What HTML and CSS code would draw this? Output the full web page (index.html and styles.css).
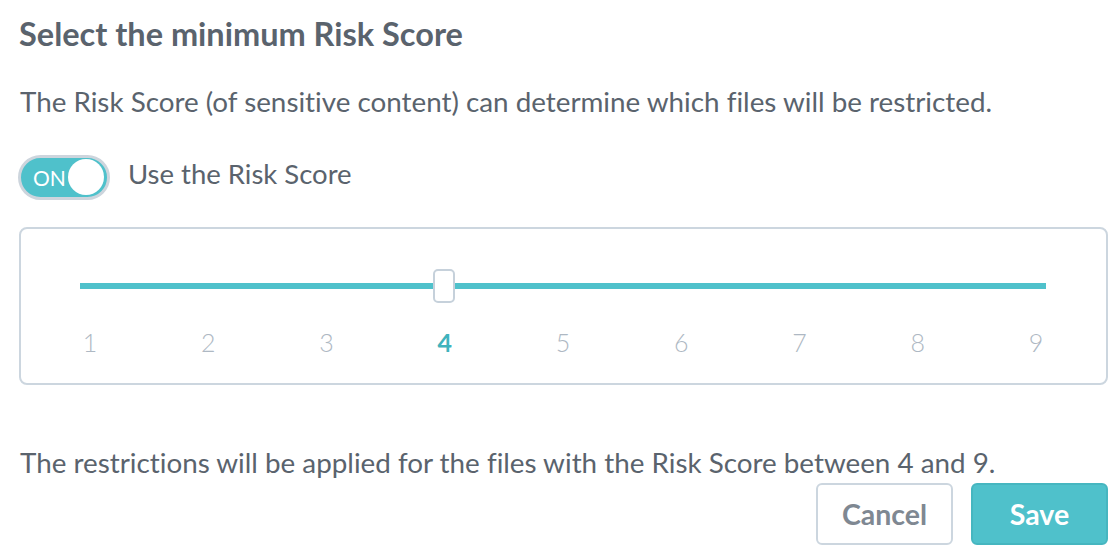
FILE: index.html
```
<!DOCTYPE html>
<html>
<head>
<meta charset="utf-8">
<link rel="stylesheet" href="styles.css">
</head>
<body>
<div class="panel">
  <h1 class="title">Select the minimum Risk Score</h1>
  <p class="desc">The Risk Score (of sensitive content) can determine which files will be restricted.</p>
  <div class="toggle-row">
    <div class="toggle"><span class="toggle-label">ON</span><span class="knob"></span></div>
    <span class="toggle-text">Use the Risk Score</span>
  </div>
  <div class="slider-box">
    <div class="track-wrap">
      <div class="track"></div>
      <div class="handle handle-at-4"></div>
    </div>
    <div class="labels">
      <span>1</span><span>2</span><span>3</span><span class="active">4</span><span>5</span><span>6</span><span>7</span><span>8</span><span>9</span>
    </div>
  </div>
  <p class="note">The restrictions will be applied for the files with the Risk Score between 4 and 9.</p>
  <div class="actions">
    <button class="btn btn-cancel">Cancel</button>
    <button class="btn btn-save">Save</button>
  </div>
</div>
</body>
</html>
```
FILE: styles.css
```
* { box-sizing: border-box; }
body {
  margin: 0;
  background: #ffffff;
  font-family: Lato, "Open Sans", sans-serif;
  color: #5a636d;
  font-variant-ligatures: none;
}
.panel {
  width: 1108px;
  padding: 14px 0 0 19px;
}
.title {
  margin: 0;
  font-size: 32.5px;
  font-weight: 700;
  line-height: 40px;
  color: #5a636d;
}
.desc {
  margin: 28px 0 0 1px;
  font-size: 27.8px;
  line-height: 40px;
}
.toggle-row {
  display: flex;
  align-items: center;
  margin-top: 32px;
  height: 46px;
}
.toggle {
  width: 92px;
  height: 45px;
  margin-left: -1px;
  border-radius: 23px;
  background: #4fc1cb;
  border: 3px solid #cdd5dd;
  display: flex;
  align-items: center;
  justify-content: space-between;
  padding: 0 3px 0 12px;
}
.toggle-label {
  color: #ffffff;
  font-size: 21px;
}
.knob {
  width: 36px;
  height: 36px;
  border-radius: 50%;
  background: #ffffff;
}
.toggle-text {
  margin-left: 18px;
  padding-bottom: 8px;
  font-size: 27.5px;
}
.slider-box {
  margin-top: 27px;
  height: 158px;
  border: 2px solid #ccd6df;
  border-radius: 8px;
  padding: 40px 60px 0 59px;
}
.track-wrap {
  position: relative;
  height: 34px;
}
.track {
  position: absolute;
  left: 0;
  right: 0;
  top: 14px;
  height: 6px;
  background: #4fc1cb;
}
.handle {
  position: absolute;
  top: 0;
  width: 22px;
  height: 34px;
  background: #ffffff;
  border: 2px solid #c6d1db;
  border-radius: 5px;
}
.handle-at-4 { left: 353px; }
.labels {
  display: flex;
  justify-content: space-between;
  margin-top: 24px;
  font-size: 25px;
  font-weight: 300;
  color: #aeb8c3;
}
.labels span { width: 20px; text-align: center; }
.labels .active { color: #3fb3bd; font-weight: 700; }
.note {
  margin: 58px 0 0 1px;
  font-size: 27.8px;
  line-height: 40px;
}
.actions {
  display: flex;
  justify-content: flex-end;
  gap: 18px;
  margin-top: 0;
}
.btn {
  width: 137px;
  height: 62px;
  border-radius: 6px;
  font-family: Lato, "Open Sans", sans-serif;
  font-size: 28.5px;
  font-weight: 700;
}
.btn-cancel {
  background: #ffffff;
  border: 2px solid #ccd6df;
  color: #7f8892;
}
.btn-save {
  background: #4fc1cb;
  border: 2px solid #46b6c0;
  color: #ffffff;
}
```
